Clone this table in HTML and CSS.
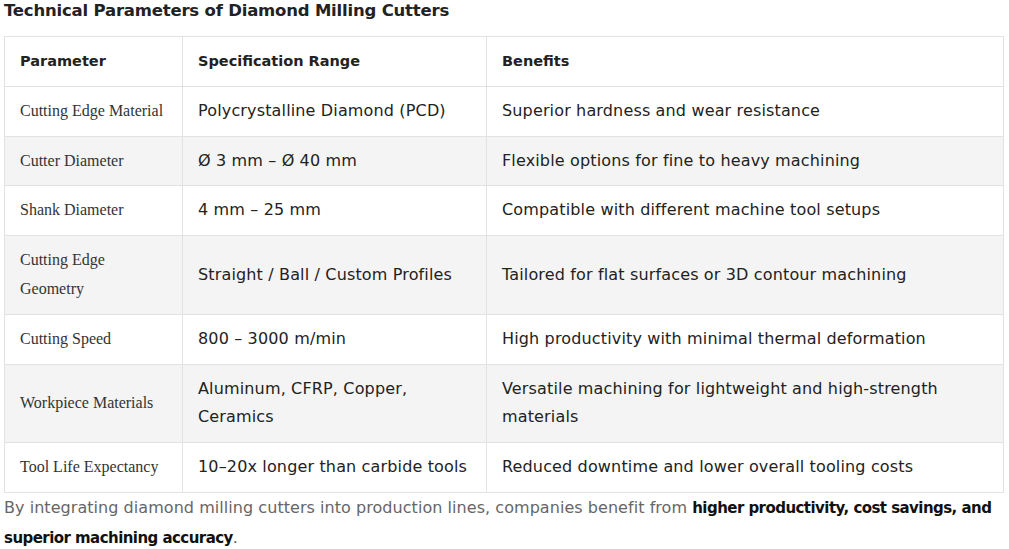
FILE: index.html
```html
<!DOCTYPE html>
<html>
<head>
<meta charset="utf-8">
<link rel="stylesheet" href="styles.css">
</head>
<body>
<div class="wrap">
  <h3 class="title">Technical Parameters of Diamond Milling Cutters</h3>
  <table class="params">
    <colgroup>
      <col class="c1"><col class="c2"><col class="c3">
    </colgroup>
    <thead>
      <tr><th>Parameter</th><th>Specification Range</th><th>Benefits</th></tr>
    </thead>
    <tbody>
      <tr><td class="name">Cutting Edge Material</td><td>Polycrystalline Diamond (PCD)</td><td>Superior hardness and wear resistance</td></tr>
      <tr><td class="name">Cutter Diameter</td><td>Ø 3 mm – Ø 40 mm</td><td>Flexible options for fine to heavy machining</td></tr>
      <tr><td class="name">Shank Diameter</td><td>4 mm – 25 mm</td><td>Compatible with different machine tool setups</td></tr>
      <tr><td class="name">Cutting Edge Geometry</td><td>Straight / Ball / Custom Profiles</td><td>Tailored for flat surfaces or 3D contour machining</td></tr>
      <tr><td class="name">Cutting Speed</td><td>800 – 3000 m/min</td><td>High productivity with minimal thermal deformation</td></tr>
      <tr><td class="name">Workpiece Materials</td><td>Aluminum, CFRP, Copper, Ceramics</td><td>Versatile machining for lightweight and high-strength materials</td></tr>
      <tr><td class="name">Tool Life Expectancy</td><td>10–20x longer than carbide tools</td><td>Reduced downtime and lower overall tooling costs</td></tr>
    </tbody>
  </table>
  <p class="note">By integrating diamond milling cutters into production lines, companies benefit from <strong>higher productivity, cost savings, and superior machining accuracy</strong>.</p>
</div>
</body>
</html>
```
FILE: styles.css
```css
html, body {
  margin: 0;
  padding: 0;
  background: #fff;
}
.wrap {
  padding: 0 6px 0 4px;
  font-family: "DejaVu Sans", "Liberation Sans", sans-serif;
  color: #333;
}
.title {
  margin: 0;
  height: 36px;
  font-size: 16.5px;
  line-height: 22px;
  font-weight: 700;
  color: #222;
  letter-spacing: -0.2px;
}
.params {
  width: 999px;
  border-collapse: collapse;
  table-layout: fixed;
  font-size: 16px;
  letter-spacing: 0.15px;
}
.c1 { width: 178px; }
.c2 { width: 304px; }
.c3 { width: 517px; }
.params th, .params td {
  border: 1px solid #e2e2e2;
  padding: 10px 15px;
  line-height: 28.8px;
  text-align: left;
  vertical-align: middle;
  color: #222;
}
.params th {
  font-weight: 700;
  font-size: 14.5px;
  letter-spacing: 0;
}
.params tbody tr:nth-child(even) td {
  background: #f4f4f4;
}
.params td.name {
  font-family: "Liberation Serif", "Times New Roman", serif;
  font-size: 16px;
  letter-spacing: 0;
  color: #333;
}
.note {
  margin: 0;
  font-size: 16px;
  letter-spacing: 0.05px;
  line-height: 29px;
  color: #666;
}
.note strong {
  color: #111;
  font-weight: 700;
  font-size: 15px;
  letter-spacing: -0.55px;
}
```
